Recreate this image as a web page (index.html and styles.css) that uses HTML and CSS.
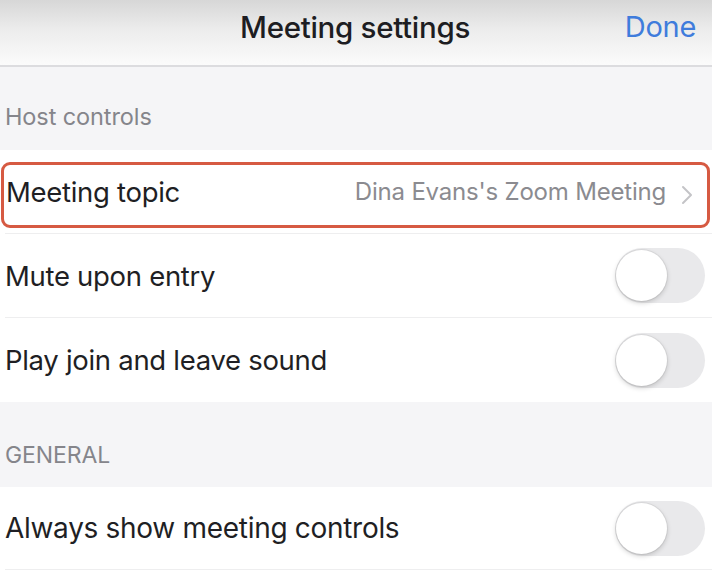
FILE: index.html
```html
<!DOCTYPE html>
<html>
<head>
<meta charset="utf-8">
<link rel="stylesheet" href="styles.css">
</head>
<body>
<div class="screen">
  <header class="nav">
    <div class="nav-title">Meeting settings</div>
    <div class="nav-done">Done</div>
  </header>

  <div class="section-head">Host controls</div>
  <div class="list">
    <div class="row row-topic">
      <div class="topic-box">
        <span class="label">Meeting topic</span>
        <span class="value">Dina Evans's Zoom Meeting</span>
        <svg class="chev" width="12" height="20" viewBox="0 0 12 20"><path d="M2 2 L10 10 L2 18" fill="none" stroke="#c4c4c7" stroke-width="2" stroke-linecap="round" stroke-linejoin="round"/></svg>
      </div>
    </div>
    <div class="row">
      <span class="label">Mute upon entry</span>
      <span class="toggle"><span class="knob"></span></span>
    </div>
    <div class="row last">
      <span class="label">Play join and leave sound</span>
      <span class="toggle"><span class="knob"></span></span>
    </div>
  </div>

  <div class="section-head general">GENERAL</div>
  <div class="list">
    <div class="row final">
      <span class="label">Always show meeting controls</span>
      <span class="toggle"><span class="knob"></span></span>
    </div>
  </div>
</div>
</body>
</html>
```
FILE: styles.css
```css
* { box-sizing: border-box; }
html, body { margin: 0; padding: 0; background: #ffffff; }
body { font-family: Inter, "Noto Sans", "Liberation Sans", sans-serif; }
.screen { width: 712px; height: 580px; overflow: hidden; background: #ffffff; }

.nav {
  height: 67px;
  display: flex;
  align-items: center;
  justify-content: center;
  position: relative;
  background: linear-gradient(#d7d7d7 0%, #ececec 45%, #fbfbfb 100%);
  border-bottom: 2px solid #dcdcdf;
  padding-bottom: 12px;
}
.nav-title { font-size: 29.5px; font-weight: 500; color: #1d1d22; letter-spacing: -0.3px; margin-left: -2px; }
.nav-done { position: absolute; right: 16px; top: 9px; font-size: 29px; color: #3f7cdc; letter-spacing: -0.3px; }

.section-head {
  height: 83px;
  background: #f5f5f7;
  display: flex;
  align-items: flex-end;
  padding: 0 0 19px 5px;
  font-size: 23.5px;
  color: #85858b;
  letter-spacing: -0.1px;
}
.section-head.general { height: 85px; padding-bottom: 18px; font-size: 23px; }

.list { background: #ffffff; }
.row {
  margin-left: 5px;
  height: 84px;
  display: flex;
  align-items: center;
  justify-content: space-between;
  padding-right: 7px;
  border-bottom: 1px solid #eeeeef;
}
.row.last { border-bottom: none; }
.row.final { height: 83px; }
.label { font-size: 27.5px; color: #1f1f24; letter-spacing: -0.3px; }
.row.final .label { font-size: 28px; }

.row-topic { align-items: flex-start; padding: 12px 2px 0 0; }
.topic-box {
  margin-left: -4px;
  flex: 1;
  height: 66px;
  border: 3px solid #d65a42;
  border-radius: 9px;
  display: flex;
  align-items: center;
  padding: 0 14px 7px 2px;
}
.topic-box .label { flex: 1; }
.topic-box .chev { margin-top: 6px; }
.value { font-size: 24px; color: #8b8b90; letter-spacing: -0.2px; margin-right: 15px; }
.chev { display: block; }

.toggle {
  width: 90px;
  height: 55px;
  border-radius: 28px;
  background: #e9e9eb;
  position: relative;
  flex: none;
}
.knob {
  position: absolute;
  left: 1px;
  top: 2px;
  width: 51px;
  height: 51px;
  border-radius: 50%;
  background: #ffffff;
  box-shadow: 0 2px 5px rgba(0,0,0,0.18), 0 0 0 1px rgba(0,0,0,0.05);
}
```
